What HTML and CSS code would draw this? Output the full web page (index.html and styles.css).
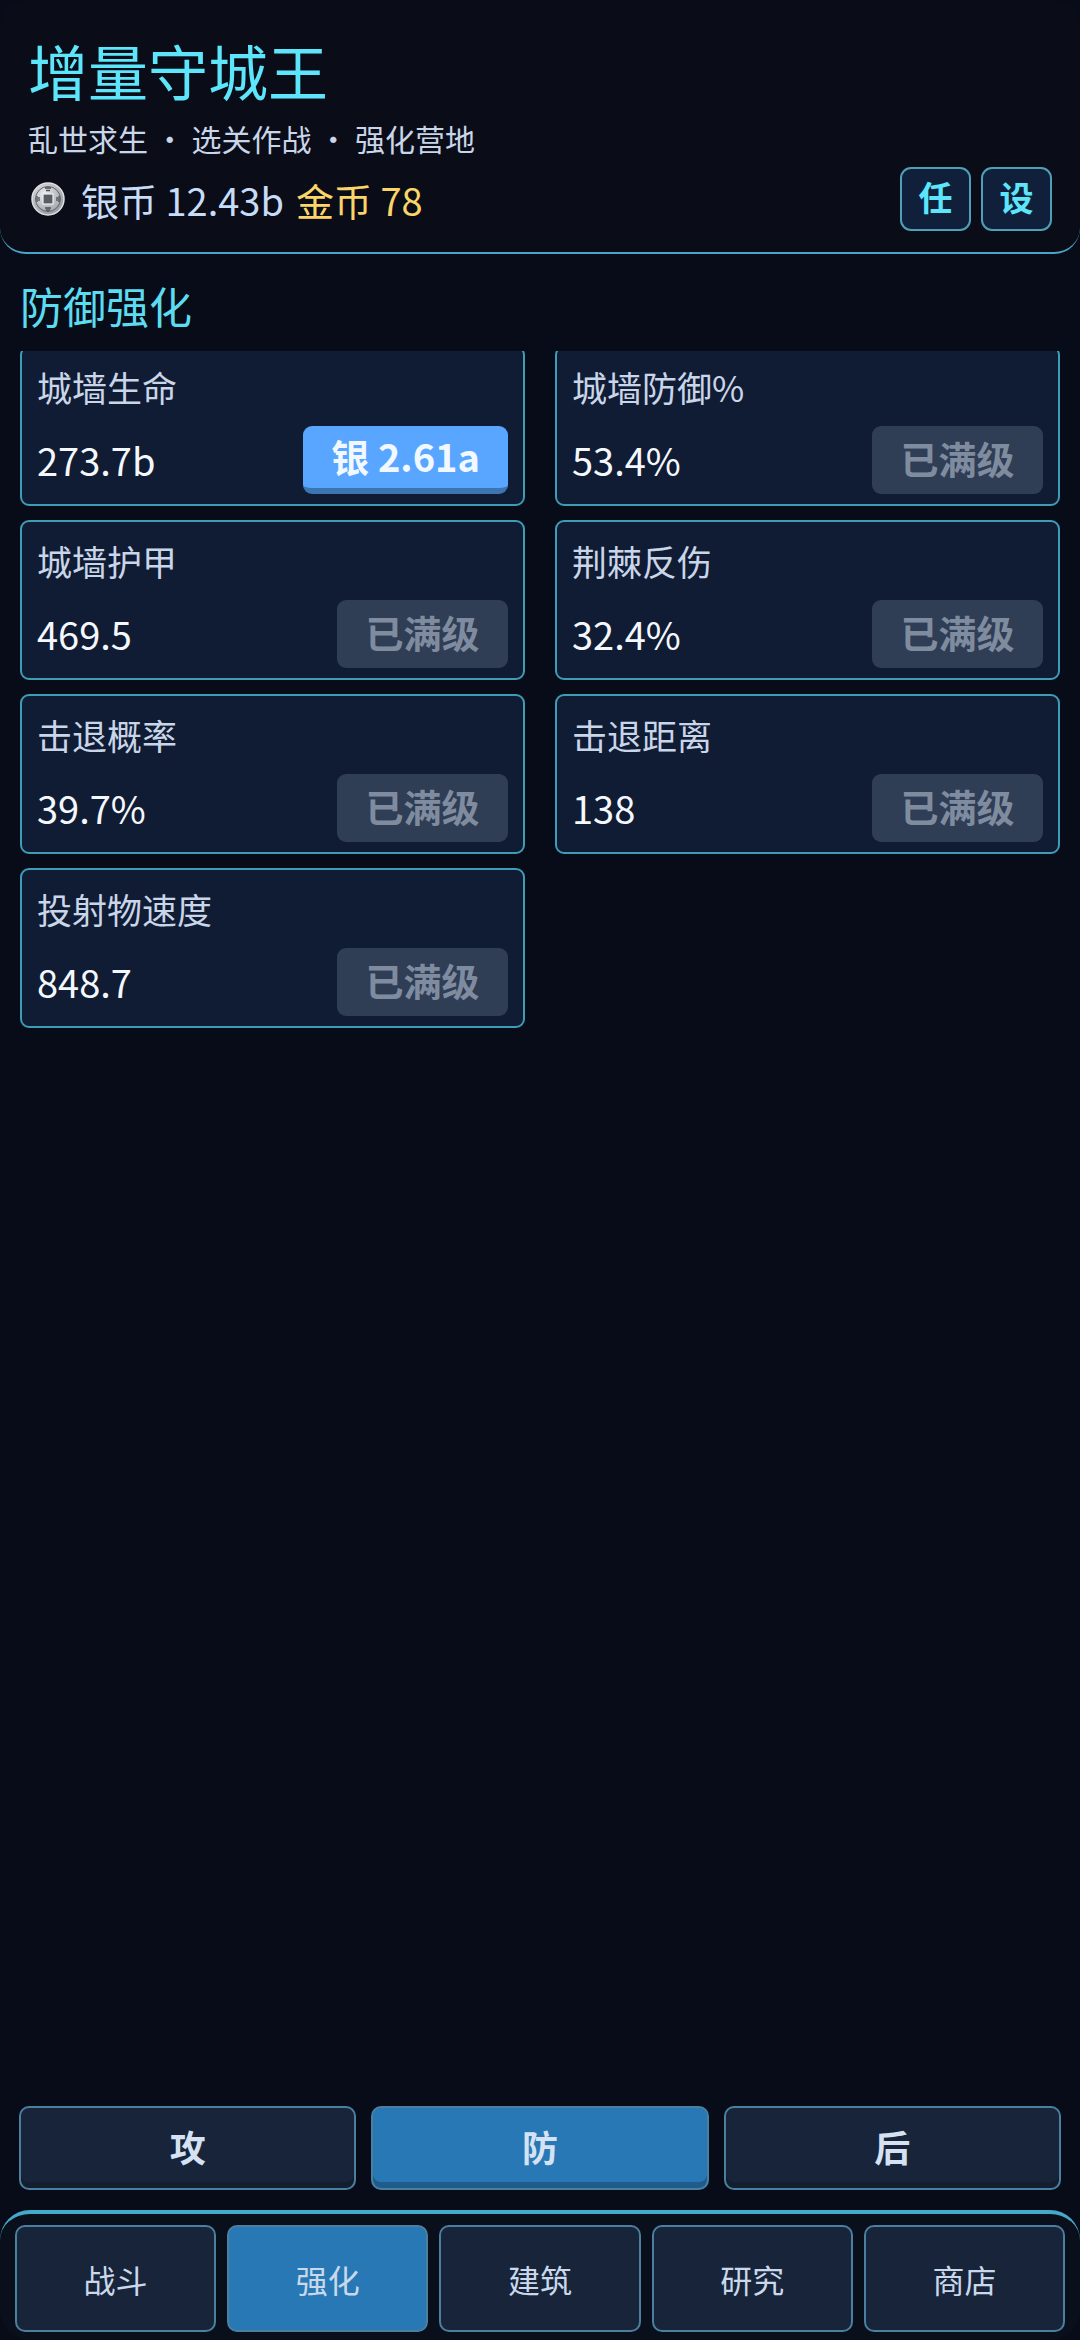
FILE: index.html
```html
<!DOCTYPE html>
<html lang="zh-CN">
<head>
    <meta charset="UTF-8">
    <title>增量守城王</title>
    <link rel="stylesheet" href="styles.css">
</head>
<body>
    <div class="app">
        <header class="top">
            <h1 class="title">增量守城王</h1>
            <div class="subtitle">乱世求生 ・ 选关作战 ・ 强化营地</div>
            <div class="stats">
                <svg class="coin" viewBox="0 0 34 34">
                    <defs>
                        <radialGradient id="silver" cx="40%" cy="35%" r="75%">
                            <stop offset="0" stop-color="#eceef0"/>
                            <stop offset="1" stop-color="#8d9196"/>
                        </radialGradient>
                    </defs>
                    <circle cx="17" cy="17" r="16" fill="url(#silver)" stroke="#dfe1e3" stroke-width="1.5"/>
                    <circle cx="17" cy="17" r="12.500" fill="none" stroke="#5d6166" stroke-width="1"/>
                    <rect x="12" y="12" width="10" height="10" fill="#5a5e64" stroke="#eceef0" stroke-width="1.2"/>
                    <path d="M14 6h6M15 8.500h4M14 26h6M15 28h4M6 14v6M8 15v4M26 15v4M28 14v6" stroke="#4b4f55" stroke-width="1.300" fill="none"/>
                </svg>
                <span class="silver">银币 12.43b</span>
                <span class="gold">金币 78</span>
                <div class="top-btns">
                    <button class="top-btn">任</button>
                    <button class="top-btn">设</button>
                </div>
            </div>
        </header>

        <h2 class="section-title">防御强化</h2>

        <div class="scroll">
            <div class="cards">
                <div class="card">
                    <div class="card-name">城墙生命</div>
                    <div class="card-row"><span class="card-val">273.7b</span><button class="buy">银 2.61a</button></div>
                </div>
                <div class="card">
                    <div class="card-name">城墙防御%</div>
                    <div class="card-row"><span class="card-val">53.4%</span><button class="buy maxed">已满级</button></div>
                </div>
                <div class="card">
                    <div class="card-name">城墙护甲</div>
                    <div class="card-row"><span class="card-val">469.5</span><button class="buy maxed">已满级</button></div>
                </div>
                <div class="card">
                    <div class="card-name">荆棘反伤</div>
                    <div class="card-row"><span class="card-val">32.4%</span><button class="buy maxed">已满级</button></div>
                </div>
                <div class="card">
                    <div class="card-name">击退概率</div>
                    <div class="card-row"><span class="card-val">39.7%</span><button class="buy maxed">已满级</button></div>
                </div>
                <div class="card">
                    <div class="card-name">击退距离</div>
                    <div class="card-row"><span class="card-val">138</span><button class="buy maxed">已满级</button></div>
                </div>
                <div class="card">
                    <div class="card-name">投射物速度</div>
                    <div class="card-row"><span class="card-val">848.7</span><button class="buy maxed">已满级</button></div>
                </div>
            </div>
        </div>

        <div class="tabs">
            <button class="tab">攻</button>
            <button class="tab active">防</button>
            <button class="tab">后</button>
        </div>

        <nav class="nav">
            <button class="nav-btn">战斗</button>
            <button class="nav-btn active">强化</button>
            <button class="nav-btn">建筑</button>
            <button class="nav-btn">研究</button>
            <button class="nav-btn">商店</button>
        </nav>
    </div>
</body>
</html>
```

FILE: styles.css
```css
* {
    box-sizing: border-box;
}

body {
    margin: 0;
    background-color: #080c19;
    font-family: "Noto Sans CJK SC", "Noto Sans", sans-serif;
}

button {
    font-family: inherit;
    cursor: pointer;
}

.app {
    height: 2340px;
    display: flex;
    flex-direction: column;
    overflow: hidden;
}

.top {
    height: 254px;
    background-color: #0a0d18;
    border-bottom: 2px solid #4aa6c8;
    border-radius: 26px;
    padding: 26px 28px 0 28px;
}

.title {
    margin: 0;
    font-size: 60px;
    font-weight: 400;
    line-height: 88px;
    color: #5ce5fb;
}

.subtitle {
    font-size: 30px;
    line-height: 44px;
    color: #c9d5e8;
    margin-top: 2px;
}

.stats {
    display: flex;
    align-items: center;
    height: 62px;
    margin-top: 8px;
    font-size: 38px;
}

.coin {
    width: 34px;
    height: 34px;
    margin: 0 16px 0 3px;
}

.silver {
    color: #c6dcf7;
}

.gold {
    color: #fbd568;
    margin-left: 12px;
}

.top-btns {
    margin-left: auto;
    display: flex;
    gap: 10px;
}

.top-btn {
    width: 71px;
    height: 64px;
    padding: 0 0 5px 0;
    background-color: #10203a;
    border: 2px solid #4f9fb8;
    border-radius: 11px;
    color: #5ce5fb;
    font-size: 34px;
    font-weight: 700;
}

.section-title {
    margin: 0;
    height: 97px;
    padding: 22px 0 0 20px;
    font-size: 43px;
    font-weight: 400;
    line-height: 58px;
    color: #5cdcf0;
}

.scroll {
    flex: 1;
    overflow: hidden;
    padding: 0 20px;
}

.cards {
    margin-top: -5px;
    display: grid;
    grid-template-columns: 1fr 1fr;
    column-gap: 30px;
    row-gap: 14px;
}

.card {
    height: 160px;
    background-color: #101c33;
    border: 2px solid #3f9cb5;
    border-radius: 9px;
    padding: 14px 15px 0 15px;
}

.card-name {
    font-size: 35px;
    line-height: 50px;
    color: #c9d5e8;
}

.card-row {
    display: flex;
    align-items: flex-end;
    justify-content: space-between;
    margin-top: 14px;
}

.card-val {
    font-size: 38px;
    line-height: 54px;
    margin-bottom: 7px;
    color: #f4f8fc;
}

.buy {
    height: 68px;
    padding: 0 28px 4px 28px;
    background-color: #58a6ff;
    border: none;
    border-bottom: 6px solid #3d74b2;
    border-radius: 9px;
    color: #f2f8ff;
    font-size: 38px;
    font-weight: 700;
}

.buy.maxed {
    width: 171px;
    padding: 0 0 5px 0;
    background-color: #2f3d55;
    border-bottom: none;
    color: #7f8ca0;
}

.tabs {
    display: grid;
    grid-template-columns: repeat(3, 1fr);
    gap: 15px;
    padding: 0 19px;
    margin-bottom: 20px;
}

.tab {
    height: 84px;
    padding: 0 0 4px 0;
    background-color: #18243a;
    border: 2px solid #4a7f9f;
    border-radius: 10px;
    box-shadow: inset 0 -6px 0 #131e31;
    color: #d5e2f3;
    font-size: 36px;
    font-weight: 700;
}

.tab.active {
    background-color: #2878b5;
    box-shadow: inset 0 -6px 0 #1f5c8c;
}

.nav {
    height: 130px;
    background-color: #0a0f1c;
    border-top: 4px solid #45a9c9;
    border-radius: 30px;
    padding: 11px 15px 8px 15px;
    display: grid;
    grid-template-columns: repeat(5, 1fr);
    gap: 11px;
}

.nav-btn {
    padding: 0;
    background-color: #18243a;
    border: 2px solid #4a7f9f;
    border-radius: 10px;
    color: #c9d8ea;
    font-size: 32px;
}

.nav-btn.active {
    background-color: #2878b5;
}
```
